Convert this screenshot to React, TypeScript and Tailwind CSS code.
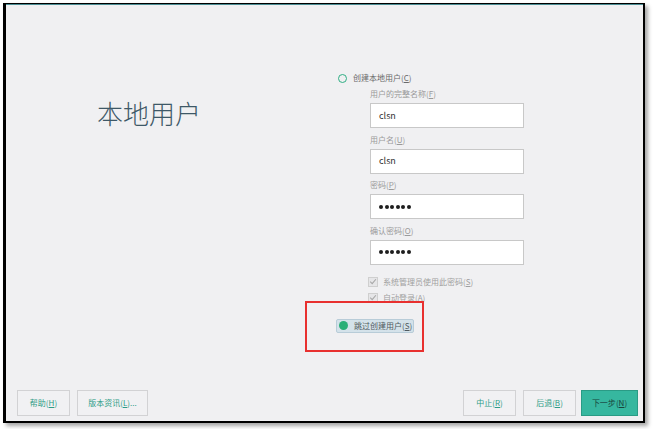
import React from 'react';

const font = { fontFamily: '"Noto Sans CJK SC", "Noto Sans", sans-serif' };

function Dots() {
  return (
    <span className="flex items-center gap-[1.5px]" aria-label="••••••">
      {[0, 1, 2, 3, 4, 5].map((i) => (
        <span key={i} className="h-[4px] w-[4px] rounded-full bg-[#1e1e1e]" />
      ))}
    </span>
  );
}

function Field({ label, hotkey, value, secret }: { label: string; hotkey: string; value: string; secret?: boolean }) {
  return (
    <div className="flex flex-col">
      <p className="h-[12px] text-[8px] leading-[12px] text-[#9a9a9a]">
        {label}(<span className="underline">{hotkey}</span>)
      </p>
      <div className="mt-[3px] flex h-[25px] w-[154px] items-center border border-[#c8c8c8] bg-white px-[8px]">
        {secret ? <Dots /> : <span className="text-[9px] text-[#333]">{value}</span>}
      </div>
    </div>
  );
}

function Check({ label, hotkey }: { label: string; hotkey: string }) {
  return (
    <div className="flex h-[16px] items-center gap-[5px]">
      <span className="flex h-[10px] w-[10px] items-center justify-center border border-[#cfcfcf] bg-[#e6e6e8]">
        <svg viewBox="0 0 10 10" className="h-[9px] w-[9px]">
          <path d="M1.5 5.2 L4 7.6 L8.6 2.2" fill="none" stroke="#a8a8a8" strokeWidth="1.4" />
        </svg>
      </span>
      <span className="text-[8px] text-[#a0a0a0]">
        {label}(<span className="underline">{hotkey}</span>)
      </span>
    </div>
  );
}

function Btn({ label, hotkey, suffix, primary, w }: { label: string; hotkey: string; suffix?: string; primary?: boolean; w: string }) {
  return (
    <button
      type="button"
      className={`flex h-[26px] ${w} items-center justify-center border text-[8px] ${
        primary ? 'border-[#2a9b85] bg-[#36b79f] text-[#18443d]' : 'border-[#d2d2d4] bg-[#f1f1f3] text-[#2f9c86]'
      }`}
    >
      {label}(<span className="underline">{hotkey}</span>){suffix}
    </button>
  );
}

export default function App() {
  return (
    <div className="relative h-[429px] w-[653px] bg-white" style={font}>
      <div className="ml-[3px] mt-[3px] h-[420px] w-[642px] border-b-2 border-l-[3px] border-r-2 border-t border-black shadow-[3px_3px_4px_rgba(0,0,0,0.35)]">
        <div className="flex h-full flex-col border-t border-[#4a8d94] bg-[#f0f0f2]">
          <div className="flex flex-1">
            <div className="w-[332px] pl-[91px] pt-[90px]">
              <h1 className="text-[26px] font-light leading-[36px] text-[#3e5867]">本地用户</h1>
            </div>
            <div className="flex flex-col pt-[66px]">
              <div className="flex h-[14px] items-center gap-[6px]">
                <span className="h-[9px] w-[9px] rounded-full border-[1.5px] border-[#2fae84]" />
                <span className="text-[8px] text-[#6a6a6a]">
                  创建本地用户(<span className="underline">C</span>)
                </span>
              </div>
              <div className="ml-[32px] mt-[3px] flex flex-col gap-[5.5px]">
                <Field label="用户的完整名称" hotkey="F" value="clsn" />
                <Field label="用户名" hotkey="U" value="clsn" />
                <Field label="密码" hotkey="P" value="" secret />
                <Field label="确认密码" hotkey="O" value="" secret />
              </div>
              <div className="ml-[30px] mt-[9px] flex flex-col">
                <Check label="系统管理员使用此密码" hotkey="S" />
                <Check label="自动登录" hotkey="A" />
              </div>
              <div className="-ml-[2px] mt-[13px] flex h-[14px] w-fit items-center gap-[6px] whitespace-nowrap rounded-[2px] border border-[#b8ccd8] bg-[#d4e2ea] pl-[2px] pr-[1px]">
                <span className="h-[9px] w-[9px] rounded-full bg-[#2aaf78]" />
                <span className="text-[8px] text-[#505a60]">
                  跳过创建用户(<span className="underline">S</span>)
                </span>
              </div>
            </div>
          </div>
          <div className="flex items-center pb-[5px] pl-[11px] pr-[5px]">
            <Btn label="帮助" hotkey="H" w="w-[53px]" />
            <div className="w-[7px]" />
            <Btn label="版本资讯" hotkey="L" suffix="..." w="w-[71px]" />
            <div className="flex-1" />
            <Btn label="中止" hotkey="R" w="w-[53px]" />
            <div className="w-[7px]" />
            <Btn label="后退" hotkey="B" w="w-[53px]" />
            <div className="w-[5px]" />
            <Btn label="下一步" hotkey="N" primary w="w-[57px]" />
          </div>
        </div>
      </div>
      <div className="absolute left-[305px] top-[298px] h-[51px] w-[119px] border-2 border-[#e8302f]" />
    </div>
  );
}
